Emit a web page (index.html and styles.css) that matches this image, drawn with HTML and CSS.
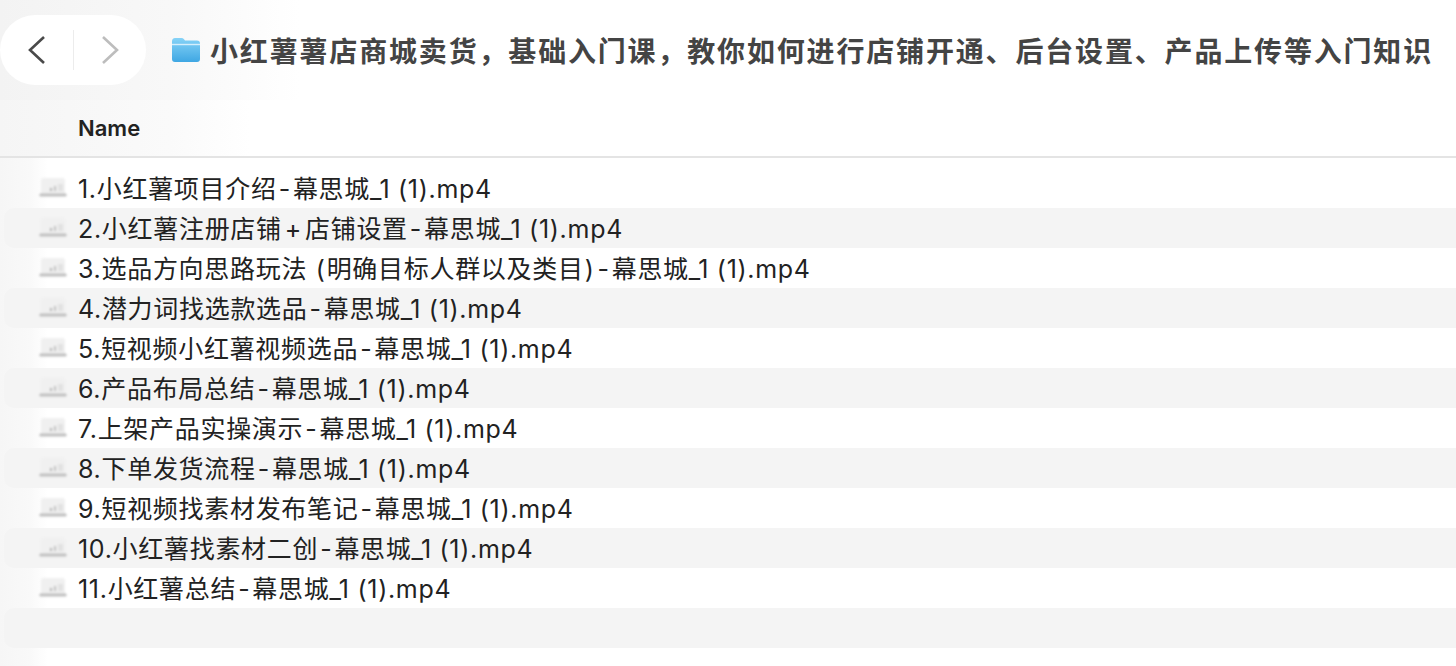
FILE: index.html
```html
<!DOCTYPE html>
<html lang="zh">
<head>
<meta charset="utf-8">
<title>Finder</title>
<link rel="stylesheet" href="styles.css">
</head>
<body>
<svg class="defs" width="0" height="0" aria-hidden="true">
  <defs>
    <linearGradient id="folderFill" x1="0" y1="0" x2="0" y2="1">
      <stop offset="0" stop-color="#86d3f7"/>
      <stop offset="1" stop-color="#3fa7e3"/>
    </linearGradient>
    <symbol id="video" viewBox="0 0 30 24">
      <path d="M3 5.500Q3 3 5.500 3H24.500Q27 3 27 5.500V19H3Z" fill="#f0f0f0"/>
      <rect x="1.500" y="18.500" width="27" height="3" rx="1" fill="#c0c0c0"/>
      <rect x="12" y="13" width="2" height="3" fill="#b5b5b5"/>
      <rect x="16" y="11" width="2" height="5" fill="#c4c4c4"/>
      <rect x="20" y="9" width="5" height="7" fill="#e2e2e2"/>
    </symbol>
  </defs>
</svg>
<div class="window">
  <header class="toolbar">
    <nav class="nav-pill">
      <button class="nav-btn" type="button" aria-label="Back">
        <svg width="24" height="34" viewBox="0 0 24 34"><path d="M20 4 6 17l14 13" fill="none" stroke="#4a4a4a" stroke-width="2.600"/></svg>
      </button>
      <span class="nav-divider"></span>
      <button class="nav-btn" type="button" aria-label="Forward">
        <svg width="24" height="34" viewBox="0 0 24 34"><path d="M5 4l14 13L5 30" fill="none" stroke="#bdbdbd" stroke-width="2.600"/></svg>
      </button>
    </nav>
    <svg class="folder" width="30" height="26" viewBox="0 0 30 26">
      <path d="M1 4.500Q1 1 4 1H10.500Q12 1 13 2.200L14 3.400H26Q29 3.400 29 6.500V22Q29 25 26 25H4Q1 25 1 22Z" fill="url(#folderFill)"/>
      <path d="M1 7.500H29" stroke="#d5effc" stroke-width="1.400"/>
    </svg>
    <h1 class="title">小红薯薯店商城卖货，基础入门课，教你如何进行店铺开通、后台设置、产品上传等入门知识</h1>
  </header>
  <div class="col-header">Name</div>
  <ul class="files">
    <li class="file"><svg class="file-icon"><use href="#video"/></svg><span>1.小红薯项目介绍<span class="sep">-</span>幕思城_1 (1).mp4</span></li>
    <li class="file"><svg class="file-icon"><use href="#video"/></svg><span>2.小红薯注册店铺<span class="plus">+</span>店铺设置<span class="sep">-</span>幕思城_1 (1).mp4</span></li>
    <li class="file"><svg class="file-icon"><use href="#video"/></svg><span>3.选品方向思路玩法 <span class="paren">(</span>明确目标人群以及类目<span class="paren">)</span><span class="sep">-</span>幕思城_1 (1).mp4</span></li>
    <li class="file"><svg class="file-icon"><use href="#video"/></svg><span>4.潜力词找选款选品<span class="sep">-</span>幕思城_1 (1).mp4</span></li>
    <li class="file"><svg class="file-icon"><use href="#video"/></svg><span>5.短视频小红薯视频选品<span class="sep">-</span>幕思城_1 (1).mp4</span></li>
    <li class="file"><svg class="file-icon"><use href="#video"/></svg><span>6.产品布局总结<span class="sep">-</span>幕思城_1 (1).mp4</span></li>
    <li class="file"><svg class="file-icon"><use href="#video"/></svg><span>7.上架产品实操演示<span class="sep">-</span>幕思城_1 (1).mp4</span></li>
    <li class="file"><svg class="file-icon"><use href="#video"/></svg><span>8.下单发货流程<span class="sep">-</span>幕思城_1 (1).mp4</span></li>
    <li class="file"><svg class="file-icon"><use href="#video"/></svg><span>9.短视频找素材发布笔记<span class="sep">-</span>幕思城_1 (1).mp4</span></li>
    <li class="file"><svg class="file-icon"><use href="#video"/></svg><span>10.小红薯找素材二创<span class="sep">-</span>幕思城_1 (1).mp4</span></li>
    <li class="file"><svg class="file-icon"><use href="#video"/></svg><span>11.小红薯总结<span class="sep">-</span>幕思城_1 (1).mp4</span></li>
    <li class="file"></li>
  </ul>
</div>
</body>
</html>
```
FILE: styles.css
```css
* { box-sizing: border-box; }
html, body { margin: 0; height: 100%; overflow: hidden; }
body {
  background: #fff;
  color: #222;
  font-family: Inter, "Noto Sans CJK SC", sans-serif;
}
.defs { display: block; height: 0; }
.window { height: 666px; display: flex; flex-direction: column; }
.toolbar {
  height: 100px;
  display: flex;
  align-items: center;
  background:
    linear-gradient(90deg, #f3f3f3 0, #f8f8f8 170px, #fff 300px);
}
.nav-pill {
  width: 146px;
  height: 70px;
  border-radius: 35px;
  background: #fff;
  display: flex;
  align-items: center;
  flex: none;
  margin-right: 25px;
}
.nav-btn {
  flex: 1;
  height: 100%;
  border: 0;
  padding: 0;
  background: none;
  display: flex;
  align-items: center;
  justify-content: center;
}
.nav-divider { width: 1px; height: 40px; background: #ececec; }
.folder { flex: none; margin-right: 9px; }
.title {
  margin: 0;
  font-size: 28px;
  font-weight: 700;
  letter-spacing: 1.830px;
  color: #444;
  white-space: nowrap;
}
.col-header {
  height: 58px;
  padding: 14px 0 0 78px;
  font-size: 22px;
  font-weight: 600;
  line-height: 28px;
  color: #222;
  border-bottom: 2px solid #e4e4e4;
  background: linear-gradient(90deg, #f5f5f5 0, #fafafa 170px, #fff 250px);
}
.files {
  list-style: none;
  margin: 0;
  padding: 10px 0 0;
  flex: 1;
  background: linear-gradient(90deg, #f6f6f6 0, #f9f9f9 30px, #fff 48px);
}
.file {
  height: 40px;
  margin-left: 4px;
  padding: 0 0 2px 34px;
  display: flex;
  align-items: center;
  font-size: 25px;
  letter-spacing: .7px;
  white-space: nowrap;
  border-radius: 10px 0 0 10px;
  color: #222;
}
.file:nth-child(even) { background: #f4f4f4; }
.file-icon { width: 30px; height: 24px; margin-right: 10px; flex: none; filter: blur(.8px); }
.sep { margin: 0 2px; }
.paren { margin: 0 1px; }
.plus { margin: 0 3px; }
```
